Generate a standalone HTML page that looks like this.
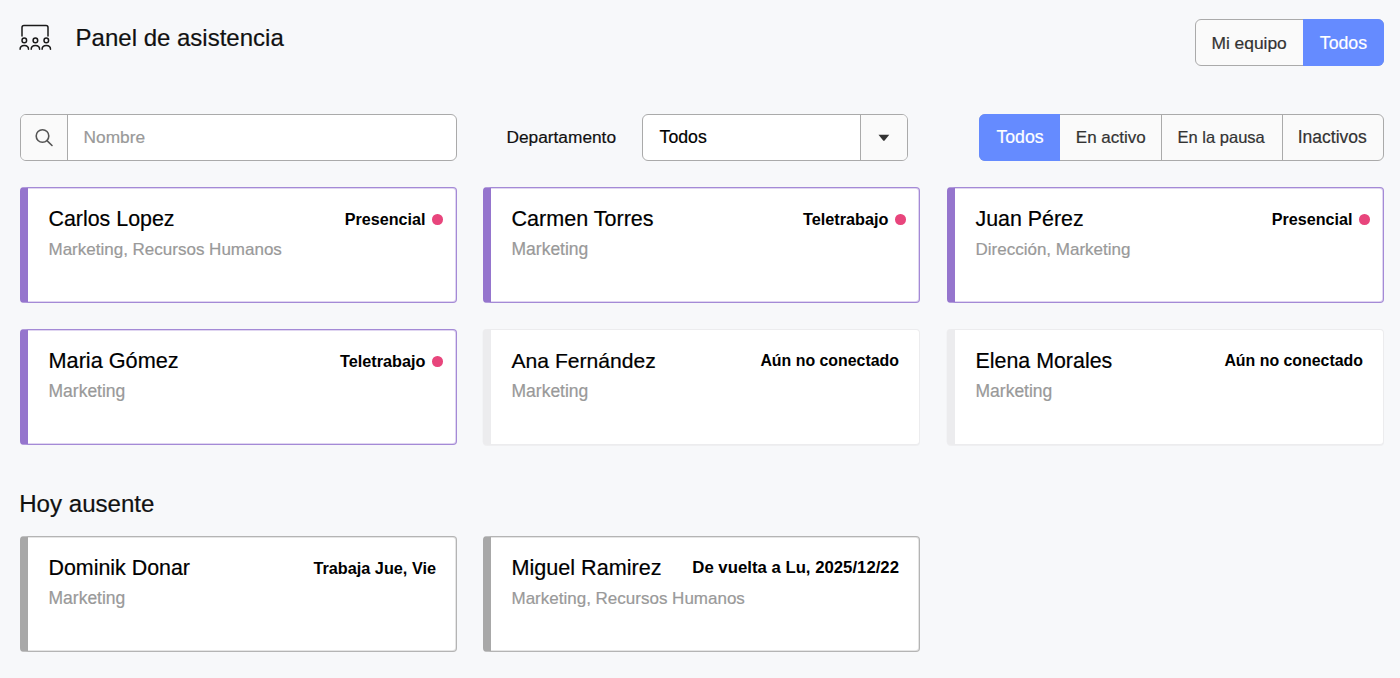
<!DOCTYPE html>
<html><head><meta charset="utf-8">
<style>
*{box-sizing:border-box;margin:0;padding:0}
html,body{width:1400px;height:678px;overflow:hidden;background:#f7f8fa;font-family:"Liberation Sans",sans-serif;color:#000}
.a,.nm,.sb{-webkit-text-stroke:0.2px currentColor}
.a{position:absolute;white-space:nowrap;line-height:1}
.box{position:absolute;border:1px solid #aaa;border-radius:6px;background:#fafafa;overflow:hidden}
.seg{position:absolute;top:0;bottom:0}
.card{position:absolute;width:437px;height:116px;background:#fff;border-radius:4px}
.p{border:1px solid #a48ad6;border-left:8px solid #9575cd;box-shadow:inset 0 1px 0 rgba(165,138,216,.35),inset -1px 0 0 rgba(165,138,216,.35),inset 0 -1px 0 rgba(165,138,216,.35)}
.g{border:1px solid #ececee;border-left:8px solid #ececee;box-shadow:0 1px 0 #efeff1,-0.5px 0 0 #f0f0f2}
.d{border:1px solid #b4b4b4;border-left:8px solid #a8a8a8;box-shadow:inset 0 1px 0 rgba(180,180,180,.35),inset -1px 0 0 rgba(180,180,180,.35),inset 0 -1px 0 rgba(180,180,180,.35)}
.nm{position:absolute;left:20.5px;top:21.2px;font-size:21.4px;line-height:1;white-space:nowrap;color:#000}
.sb{position:absolute;left:20.5px;top:51.9px;font-size:17.2px;line-height:1;white-space:nowrap;color:#999}
.st{position:absolute;right:20px;top:22.9px;font-size:16.3px;font-weight:700;line-height:1;white-space:nowrap;color:#000}
.st.dot{right:30.5px}
.dt{position:absolute;right:13.2px;top:26px;width:10.6px;height:10.6px;border-radius:50%;background:#e8457c}
</style></head><body>

<!-- header icon -->
<svg class="a" style="left:18px;top:22px" width="34" height="30" viewBox="0 0 34 30" fill="none" stroke="#1a1a1a" stroke-width="1.5" stroke-linecap="round">
  <path d="M4 14 V5.5 Q4 3.5 6 3.5 H28 Q30 3.5 30 5.5 V14"/>
  <circle cx="6.3" cy="18.4" r="2.3"/>
  <circle cx="17.4" cy="18.4" r="2.3"/>
  <circle cx="28.3" cy="18.4" r="2.3"/>
  <path d="M2.1 27.3 Q2.1 23.5 6.3 23.5 Q10.5 23.5 10.5 27.3"/>
  <path d="M13.2 27.3 Q13.2 23.5 17.4 23.5 Q21.6 23.5 21.6 27.3"/>
  <path d="M24.1 27.3 Q24.1 23.5 28.3 23.5 Q32.5 23.5 32.5 27.3"/>
</svg>
<div class="a" style="left:75.6px;top:26.1px;font-size:24px;color:#111">Panel de asistencia</div>

<!-- top toggle -->
<div class="box" style="left:1195px;top:19px;width:189px;height:47px"></div>
<div class="a" style="left:1303px;top:19px;width:81px;height:47px;background:#658bff;border-radius:0 6px 6px 0"></div>
<div class="a" style="left:1211.4px;top:34.8px;font-size:17.4px;color:#333">Mi equipo</div>
<div class="a" style="left:1319.8px;top:34.8px;font-size:17.7px;color:#fff">Todos</div>

<!-- search -->
<div class="box" style="left:20px;top:114px;width:437px;height:47px;background:#fff">
  <div class="seg" style="left:0;width:47px;background:#fafafa;border-right:1px solid #aaa"></div>
</div>
<svg class="a" style="left:32px;top:126px" width="22" height="22" viewBox="0 0 22 22" fill="none" stroke="#555" stroke-width="1.6" stroke-linecap="round">
  <circle cx="10.5" cy="10" r="6.3"/><path d="M15 14.6 L20 19.5"/>
</svg>
<div class="a" style="left:83.6px;top:129.4px;font-size:17.3px;color:#999">Nombre</div>

<!-- departamento -->
<div class="a" style="left:506.5px;top:128.6px;font-size:17.3px;color:#111">Departamento</div>
<div class="box" style="left:642px;top:114px;width:266px;height:47px;background:#fff">
  <div class="seg" style="left:217px;right:0;background:#fafafa;border-left:1px solid #aaa"></div>
</div>
<div class="a" style="left:659.6px;top:129.2px;font-size:17.7px;color:#000">Todos</div>
<svg class="a" style="left:878px;top:134px" width="12" height="8" viewBox="0 0 12 8"><path d="M0.5 0.8 H11.3 L6.6 6.6 Q5.9 7.4 5.2 6.6 Z" fill="#333"/></svg>

<!-- filters -->
<div class="box" style="left:979px;top:114px;width:405px;height:47px">
  <div class="seg" style="left:181px;width:1px;background:#aaa"></div>
  <div class="seg" style="left:302px;width:1px;background:#aaa"></div>
</div>
<div class="a" style="left:979px;top:114px;width:81px;height:47px;background:#658bff;border-radius:6px 0 0 6px"></div>
<div class="a" style="left:996.4px;top:129.2px;font-size:17.7px;color:#fff">Todos</div>
<div class="a" style="left:1075.8px;top:128.8px;font-size:17px;color:#333">En activo</div>
<div class="a" style="left:1177.6px;top:129.2px;font-size:16.5px;color:#333">En la pausa</div>
<div class="a" style="left:1297.7px;top:129.4px;font-size:17.5px;color:#333">Inactivos</div>

<!-- cards row 1 -->
<div class="card p" style="left:20px;top:187px"><div class="nm">Carlos Lopez</div><div class="sb" style="font-size:17.0px;top:53.01px">Marketing, Recursos Humanos</div><div class="st dot" style="font-size:16.15px;top:23.13px">Presencial</div><div class="dt"></div></div>
<div class="card p" style="left:483px;top:187px"><div class="nm" style="font-size:21.55px;top:19.9px">Carmen Torres</div><div class="sb" style="font-size:17.5px;top:52.59px">Marketing</div><div class="st dot" style="font-size:16.25px;top:23.04px">Teletrabajo</div><div class="dt"></div></div>
<div class="card p" style="left:947px;top:187px"><div class="nm">Juan Pérez</div><div class="sb" style="font-size:17.0px;top:53.01px">Dirección, Marketing</div><div class="st dot" style="font-size:16.15px;top:23.13px">Presencial</div><div class="dt"></div></div>
<!-- cards row 2 -->
<div class="card p" style="left:20px;top:329px"><div class="nm" style="font-size:21.7px;top:19.9px">Maria Gómez</div><div class="sb" style="font-size:17.5px;top:52.59px">Marketing</div><div class="st dot" style="font-size:16.25px;top:23.04px">Teletrabajo</div><div class="dt"></div></div>
<div class="card g" style="left:483px;top:329px"><div class="nm" style="font-size:21.1px;top:19.9px">Ana Fernández</div><div class="sb" style="font-size:17.5px;top:52.59px">Marketing</div><div class="st" style="font-size:15.9px;top:23.34px">Aún no conectado</div></div>
<div class="card g" style="left:947px;top:329px"><div class="nm">Elena Morales</div><div class="sb" style="font-size:17.5px;top:52.59px">Marketing</div><div class="st" style="font-size:15.9px;top:23.34px">Aún no conectado</div></div>

<div class="a" style="left:19.2px;top:491.9px;font-size:24.1px;color:#111">Hoy ausente</div>

<div class="card d" style="left:20px;top:536px"><div class="nm">Dominik Donar</div><div class="sb" style="font-size:17.5px;top:52.59px">Marketing</div><div class="st" style="font-size:16.25px;top:23.04px">Trabaja Jue, Vie</div></div>
<div class="card d" style="left:483px;top:536px"><div class="nm" style="font-size:21.6px;top:19.9px">Miguel Ramirez</div><div class="sb" style="font-size:17.0px;top:53.01px">Marketing, Recursos Humanos</div><div class="st" style="font-size:16.75px;top:22.62px">De vuelta a Lu, 2025/12/22</div></div>

</body></html>
